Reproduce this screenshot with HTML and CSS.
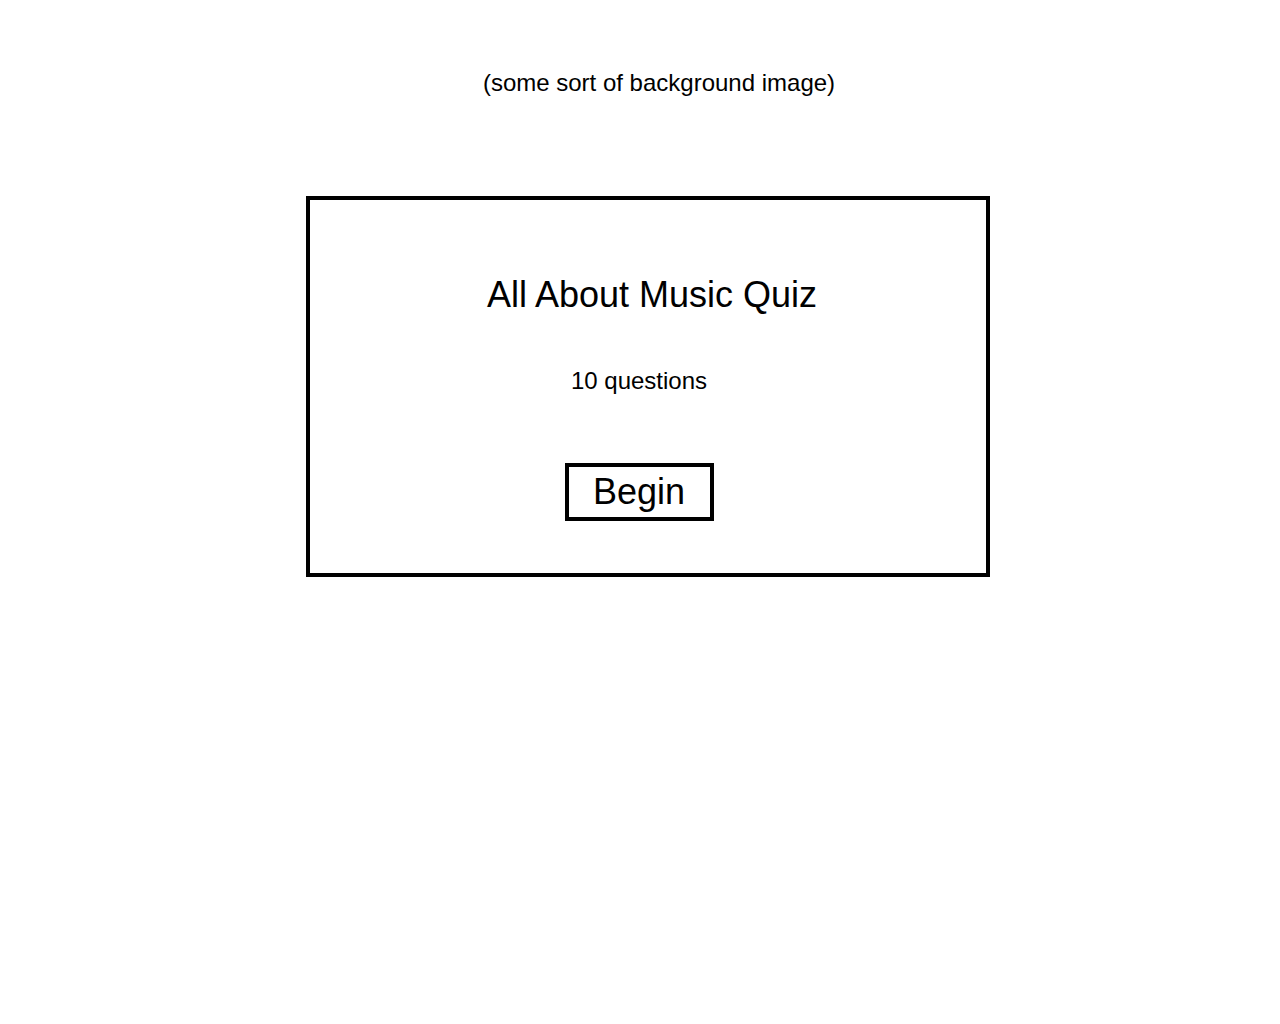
FILE: index.html
```html
<!DOCTYPE html>
<html lang="en">
<head>
<meta charset="utf-8">
<title>All About Music Quiz</title>
<link rel="stylesheet" href="styles.css">
</head>
<body>
<main class="page">
  <p class="bg-note">(some sort of background image)</p>
  <section class="card">
    <h1 class="card-title">All About Music Quiz</h1>
    <p class="card-count">10 questions</p>
    <div class="card-actions">
      <button class="begin-btn" type="button">Begin</button>
    </div>
  </section>
</main>
</body>
</html>
```
FILE: styles.css
```css
html, body {
  margin: 0;
  padding: 0;
  background: #ffffff;
}
body {
  font-family: "Liberation Sans", Arial, Helvetica, sans-serif;
  color: #000;
}
.page {
  display: flex;
  flex-direction: column;
  align-items: center;
  padding-top: 69px;
}
.bg-note {
  margin: 0;
  font-size: 24px;
  line-height: 28px;
  padding-left: 38px;
  text-align: center;
}
.card {
  margin-top: 99px;
  margin-left: 16px;
  box-sizing: border-box;
  width: 684px;
  height: 381px;
  border: 4px solid #000;
  display: flex;
  flex-direction: column;
  align-items: center;
  padding-top: 75px;
}
.card-title {
  margin: 0;
  font-weight: normal;
  font-size: 36px;
  line-height: 40px;
  padding-left: 8px;
}
.card-count {
  margin: 52px 0 0;
  font-size: 24px;
  line-height: 28px;
  padding-right: 18px;
}
.card-actions {
  margin-top: 68px;
  padding-right: 18px;
}
.begin-btn {
  box-sizing: border-box;
  width: 149px;
  height: 58px;
  border: 4px solid #000;
  background: #fff;
  color: #000;
  font-family: inherit;
  font-size: 36px;
  line-height: 50px;
  padding: 0;
  cursor: pointer;
  border-radius: 0;
}
```
